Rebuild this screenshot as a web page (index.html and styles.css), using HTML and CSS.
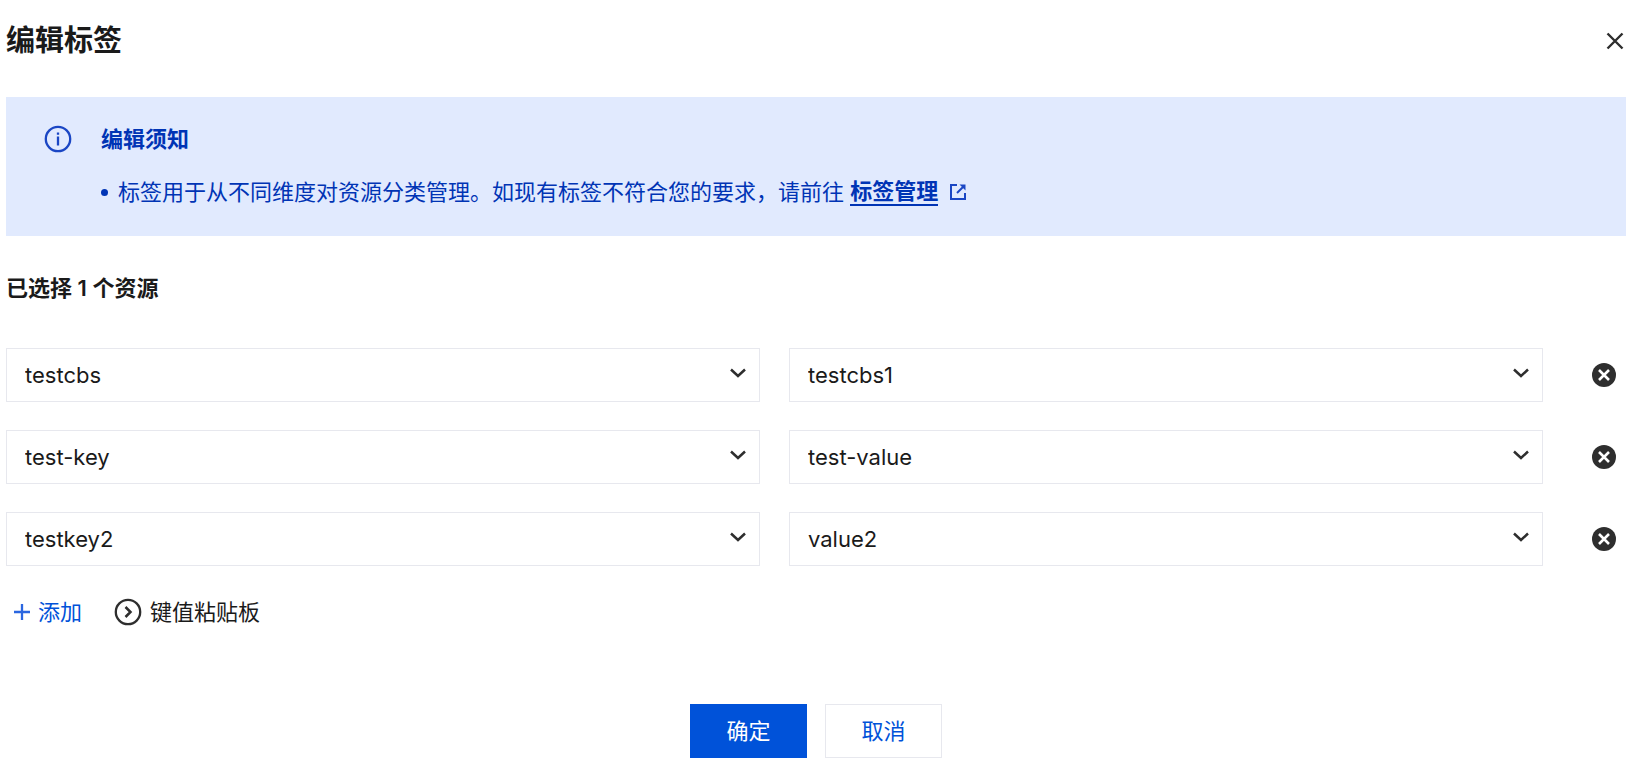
FILE: index.html
```html
<!DOCTYPE html>
<html lang="zh-CN">
<head>
    <meta charset="UTF-8">
    <meta name="viewport" content="width=device-width, initial-scale=1">
    <title>编辑标签</title>
    <link rel="stylesheet" href="styles.css">
</head>
<body>
    <div class="dialog" role="dialog" aria-labelledby="dialog-title">
        <header class="dialog-header">
            <h1 id="dialog-title">编辑标签</h1>
            <button type="button" class="icon-btn" aria-label="关闭">
                <svg width="18" height="18" viewBox="0 0 18 18" fill="none" stroke="#2e2e2e" stroke-width="2.4"><path d="M1.5 1.5l15 15M16.5 1.5l-15 15"/></svg>
            </button>
        </header>

        <section class="notice">
            <svg class="notice-icon" width="28" height="28" viewBox="0 0 28 28" fill="none" stroke="#1a46c4" stroke-width="2.3">
                <circle cx="14" cy="14" r="12.2"/>
                <path d="M14 11.5v9M14 7.5v2.3"/>
            </svg>
            <div class="notice-body">
                <h2>编辑须知</h2>
                <ul>
                    <li>标签用于从不同维度对资源分类管理。如现有标签不符合您的要求，请前往 <a href="#">标签管理</a><svg class="link-icon" width="16" height="16" viewBox="0 0 16 16" fill="none" stroke="#1a46c4" stroke-width="2"><path d="M7 1H1v14h14V9"/><path d="M7 9l7-7"/><path d="M9.5 0.5h6v6z" fill="#1a46c4" stroke="none"/></svg></li>
                </ul>
            </div>
        </section>

        <form>
            <h3 class="selected">已选择 1 个资源</h3>

            <div class="tags">
                <div class="tag-row">
                    <div class="select">
                        <select aria-label="标签键 1"><option>testcbs</option></select>
                        <svg width="16" height="10" viewBox="0 0 16 10"><path d="M1 1.5l7 6.500 7-6.500"/></svg>
                    </div>
                    <div class="select">
                        <select aria-label="标签值 1"><option>testcbs1</option></select>
                        <svg width="16" height="10" viewBox="0 0 16 10"><path d="M1 1.5l7 6.500 7-6.500"/></svg>
                    </div>
                    <button type="button" class="icon-btn" aria-label="删除">
                        <svg width="24" height="24" viewBox="0 0 24 24"><circle cx="12" cy="12" r="12" fill="#2e2e2e"/><path d="M7 7l10 10M17 7L7 17" stroke="#fff" stroke-width="2.6"/></svg>
                    </button>
                </div>
                <div class="tag-row">
                    <div class="select">
                        <select aria-label="标签键 2"><option>test-key</option></select>
                        <svg width="16" height="10" viewBox="0 0 16 10"><path d="M1 1.5l7 6.500 7-6.500"/></svg>
                    </div>
                    <div class="select">
                        <select aria-label="标签值 2"><option>test-value</option></select>
                        <svg width="16" height="10" viewBox="0 0 16 10"><path d="M1 1.5l7 6.500 7-6.500"/></svg>
                    </div>
                    <button type="button" class="icon-btn" aria-label="删除">
                        <svg width="24" height="24" viewBox="0 0 24 24"><circle cx="12" cy="12" r="12" fill="#2e2e2e"/><path d="M7 7l10 10M17 7L7 17" stroke="#fff" stroke-width="2.6"/></svg>
                    </button>
                </div>
                <div class="tag-row">
                    <div class="select">
                        <select aria-label="标签键 3"><option>testkey2</option></select>
                        <svg width="16" height="10" viewBox="0 0 16 10"><path d="M1 1.5l7 6.500 7-6.500"/></svg>
                    </div>
                    <div class="select">
                        <select aria-label="标签值 3"><option>value2</option></select>
                        <svg width="16" height="10" viewBox="0 0 16 10"><path d="M1 1.5l7 6.500 7-6.500"/></svg>
                    </div>
                    <button type="button" class="icon-btn" aria-label="删除">
                        <svg width="24" height="24" viewBox="0 0 24 24"><circle cx="12" cy="12" r="12" fill="#2e2e2e"/><path d="M7 7l10 10M17 7L7 17" stroke="#fff" stroke-width="2.6"/></svg>
                    </button>
                </div>
            </div>

            <div class="tools">
                <button type="button" class="text-btn add">
                    <svg width="16" height="16" viewBox="0 0 16 16" fill="none" stroke="#2a66e0" stroke-width="2.3"><path d="M8 0v16M0 8h16"/></svg>
                    添加
                </button>
                <button type="button" class="text-btn">
                    <svg width="28" height="28" viewBox="0 0 28 28" fill="none" stroke="#2e2e2e" stroke-width="2.3"><circle cx="14" cy="14" r="12.2"/><path d="M11.5 9l5 5-5 5" stroke-width="2.5"/></svg>
                    键值粘贴板
                </button>
            </div>

            <footer class="actions">
                <button type="submit" class="btn primary">确定</button>
                <button type="button" class="btn">取消</button>
            </footer>
        </form>
    </div>
</body>
</html>
```
FILE: styles.css
```css
* { box-sizing: border-box; }
body { margin: 0; background: #fff; color: #1a1a1a; font: 22px/32px Inter, "Noto Sans CJK SC", sans-serif; }
h1, h2, h3, ul { margin: 0; padding: 0; }
button, select { font: inherit; color: inherit; }
button { padding: 0; border: none; background: none; cursor: pointer; }
svg { display: block; flex: none; }

.dialog { padding: 21px 24px 20px 6px; }
.dialog-header { display: flex; justify-content: space-between; align-items: center; margin-bottom: 36px; }
.dialog-header h1 { font-size: 29px; line-height: 40px; font-weight: 600; }
.icon-btn { display: flex; align-items: center; justify-content: flex-end; }
.dialog-header .icon-btn { padding: 0 2px; }

.notice { display: flex; gap: 29px; padding: 26px 38px 28px; background: #e1eafe; color: #0034b5; }
.notice-icon { margin-top: 2px; }
.notice h2 { font-size: 22px; font-weight: 600; margin-bottom: 21px; }
.notice ul { list-style: none; }
.notice li { display: flex; align-items: center; white-space: pre-wrap; }
.notice li::before { content: ""; flex: none; width: 7px; height: 7px; margin-right: 10px; border-radius: 50%; background: #0034b5; }
.notice a { color: inherit; font-weight: 600; line-height: 26px; text-decoration: none; border-bottom: 2px solid; }
.link-icon { margin-left: 12px; }

.selected { margin: 36px 0 44px; font-size: 22px; font-weight: 600; }
.tags { display: grid; gap: 28px; }
.tag-row { display: grid; grid-template-columns: 1fr 1fr 54px; gap: 29px; }
.tag-row .icon-btn { padding-right: 10px; }
.select { display: grid; align-items: center; }
.select select, .select svg { grid-area: 1 / 1; }
.select select { width: 100%; height: 54px; padding: 0 48px 0 18px; border: 1px solid #e7e8ee; border-radius: 0; background: #fff; appearance: none; }
.select svg { justify-self: end; margin: 0 14px 4px 0; pointer-events: none; fill: none; stroke: #2e2e2e; stroke-width: 2.5; }

.tools { display: flex; gap: 32px; padding: 30px 8px; }
.text-btn { display: flex; align-items: center; gap: 8px; }
.add { color: #0052d9; }

.actions { display: flex; justify-content: center; gap: 18px; margin-top: 46px; }
.btn { width: 117px; height: 54px; border: 1px solid #e7e8ee; background: #fff; color: #0052d9; }
.btn.primary { border-color: #0052d9; background: #0052d9; color: #fff; }
```
